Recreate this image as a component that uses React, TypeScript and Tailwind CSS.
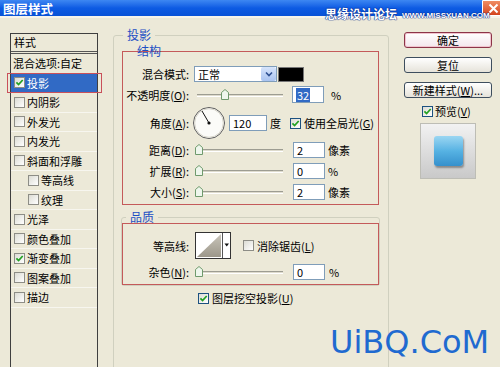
import React from "react";

const cjk = "font-['Noto_Sans_CJK_SC','Noto_Sans',sans-serif]";

function Check({ on = false, gray = false }: { on?: boolean; gray?: boolean }) {
  return (
    <span
      className={
        gray
          ? "flex h-[11px] w-[11px] shrink-0 items-center justify-center border border-[#8d8d86] bg-gradient-to-br from-[#dcdcd4] to-white"
          : "flex h-[11px] w-[11px] shrink-0 items-center justify-center border border-[#1c5180] bg-gradient-to-br from-[#dcdcd4] to-white"
      }
    >
      {on && (
        <svg width="9" height="9" viewBox="0 0 9 9">
          <path d="M1.4 4.3 3.6 6.6 7.7 2" fill="none" stroke="#21a121" strokeWidth="1.7" />
        </svg>
      )}
    </span>
  );
}

function Slider({ at }: { at: number }) {
  return (
    <div className="relative ml-[5px] h-[14px] w-[92px] shrink-0">
      <div className="absolute left-[3px] right-[3px] top-[6px] h-[3px] border-y border-t-[#9d9d92] border-b-white bg-[#dedbcd]" />
      <svg className="absolute top-[1px]" style={{ left: at }} width="8" height="11" viewBox="0 0 8 11">
        <path d="M0.5 3.5 4 0.5 7.5 3.5 V10.5 H0.5Z" fill="#eef6ec" stroke="#6f9a6d" />
      </svg>
    </div>
  );
}

function Field({ children, className }: { children: React.ReactNode; className: string }) {
  return (
    <div className={"flex h-[16px] shrink-0 items-center border border-[#7f9db9] bg-white pl-[3px] " + className}>
      {children}
    </div>
  );
}

function Label({ children }: { children: React.ReactNode }) {
  return <div className="w-[66px] shrink-0 text-right">{children}</div>;
}

function Button({ children, main = false }: { children: React.ReactNode; main?: boolean }) {
  return (
    <div
      className={
        main
          ? "flex h-[16px] items-center justify-center rounded-[3px] border border-[#8c3448] bg-gradient-to-b from-white to-[#f3e6ec] shadow-[inset_0_0_0_1px_#f1c4cf]"
          : "flex h-[16px] items-center justify-center rounded-[3px] border border-[#3e4e5e] bg-gradient-to-b from-white to-[#e6e3da]"
      }
    >
      {children}
    </div>
  );
}

const items = [
  { t: "混合选项:自定", box: false },
  { t: "投影", on: true, sel: true },
  { t: "内阴影" },
  { t: "外发光" },
  { t: "内发光" },
  { t: "斜面和浮雕" },
  { t: "等高线", sub: true },
  { t: "纹理", sub: true },
  { t: "光泽" },
  { t: "颜色叠加" },
  { t: "渐变叠加", on: true },
  { t: "图案叠加" },
  { t: "描边" },
];

export default function App() {
  return (
    <div className={`relative h-[367px] w-[500px] overflow-hidden bg-[#ece9d8] text-[11px] leading-[14px] text-black ${cjk}`}>
      {/* title bar */}
      <div className="flex h-[18px] items-start border-b-2 border-[#f6f4ea] bg-gradient-to-b from-[#3d87f2] via-[#0d5be3] to-[#0852d6]">
        <span className="ml-[3px] mt-[1px] text-[12.5px] font-bold leading-[15px] text-white">图层样式</span>
        <span className="flex-1" />
        <span className="-mr-[4px] flex h-[16px] w-[22px] items-center justify-center rounded-bl-[3px] border border-white bg-gradient-to-b from-[#f08c62] to-[#d3421a]">
          <svg width="11" height="11" viewBox="0 0 11 11">
            <path d="M1.5 1.5 9.5 9.5 M9.5 1.5 1.5 9.5" stroke="white" strokeWidth="2" />
          </svg>
        </span>
      </div>

      <div className="flex">
        {/* style list */}
        <div className="ml-[10px] mt-[15px] h-[340px] w-[88px] shrink-0 border border-[#3f3f3f]">
          <div className="h-[20px] border-b-[3px] border-double border-[#555] pl-[3px] leading-[17px]">样式</div>
          {items.map((it) => (
            <div
              key={it.t}
              className={
                it.sel
                  ? "relative flex h-[19.5px] items-center border-b border-[#f7f6ef] bg-[#316ac5] text-white"
                  : "relative flex h-[19.5px] items-center border-b border-[#f7f6ef]"
              }
            >
              {it.box === false ? (
                <span className="pl-[2px]">{it.t}</span>
              ) : (
                <>
                  <span className={it.sub ? "pl-[17px]" : "pl-[3px]"}>
                    <Check on={it.on} gray />
                  </span>
                  <span className="ml-[2px]">{it.t}</span>
                </>
              )}
              {it.sel && <div className="absolute -bottom-[1px] -left-[4px] -right-[5px] -top-[1px] border border-[#c9505a]" />}
            </div>
          ))}
        </div>

        {/* drop shadow settings */}
        <fieldset className="ml-[15px] mt-[10px] h-[400px] w-[276px] shrink-0 rounded-[3px] border border-[#d0d0bf]">
          <legend className="ml-[9px] px-[4px] text-[12px] leading-[14px] text-[#1d4fc4]">投影</legend>

          {/* structure */}
          <div className="ml-[8px] mt-[9px] w-[257px] border border-[#c45a5a] pb-[4px]">
            <div className="-mt-[8px] ml-[14px] h-[14px] text-[12px] leading-[14px] text-[#1d4fc4]">结构</div>

            <div className="mt-[8px] flex h-[16px] items-center">
              <Label>混合模式:</Label>
              <div className="ml-[5px] flex h-[16px] w-[83px] items-center justify-between border border-[#7f9db9] bg-white pl-[3px]">
                <span>正常</span>
                <span className="flex h-[14px] w-[15px] items-center justify-center rounded-[2px] bg-gradient-to-b from-[#d6e4fb] to-[#a9c3f0]">
                  <svg width="8" height="6" viewBox="0 0 8 6">
                    <path d="M1 1.5 4 4.5 7 1.5" fill="none" stroke="#2d4f91" strokeWidth="1.6" />
                  </svg>
                </span>
              </div>
              <div className="ml-[1px] h-[15px] w-[26px] border border-[#777] bg-black" />
            </div>

            <div className="mt-[4px] flex h-[17px] items-center">
              <Label>
                不透明度(<u>O</u>):
              </Label>
              <Slider at={27} />
              <Field className="ml-[6px] h-[17px] w-[32px]">
                <span className="bg-[#316ac5] px-[1px] text-white">32</span>
              </Field>
              <span className="ml-[7px]">%</span>
            </div>

            <div className="mt-[3px] flex h-[34px] items-center">
              <Label>
                角度(<u>A</u>):
              </Label>
              <svg className="ml-[3px] shrink-0" width="34" height="34" viewBox="0 0 34 34">
                <circle cx="17" cy="17" r="15.5" fill="#fbfbf8" stroke="#5c5c5c" />
                <circle cx="17" cy="17" r="14.3" fill="none" stroke="#d9d7cc" />
                <line x1="17" y1="17" x2="10" y2="5" stroke="#111" strokeWidth="1" />
                <circle cx="17" cy="17" r="1.6" fill="#111" />
              </svg>
              <Field className="ml-[3px] w-[38px]">120</Field>
              <span className="ml-[3px]">度</span>
              <span className="ml-[9px]">
                <Check on />
              </span>
              <span className="ml-[3px]">
                使用全局光(<u>G</u>)
              </span>
            </div>

            {[
              { l: "距离", k: "D", v: "2", u: "像素" },
              { l: "扩展", k: "R", v: "0", u: "%" },
              { l: "大小", k: "S", v: "2", u: "像素" },
            ].map((r, i) => (
              <div key={r.l} className={i === 0 ? "mt-[2px] flex h-[16px] items-center" : "mt-[5px] flex h-[16px] items-center"}>
                <Label>
                  {r.l}(<u>{r.k}</u>):
                </Label>
                <Slider at={1} />
                <Field className="ml-[7px] w-[32px]">{r.v}</Field>
                <span className="ml-[3px]">{r.u}</span>
              </div>
            ))}
          </div>

          {/* quality */}
          <fieldset className="ml-[7px] mt-[5px] w-[259px] rounded-[3px] border border-[#d0d0bf]">
            <legend className="ml-[4px] px-[4px] text-[12px] leading-[14px] text-[#1d4fc4]">品质</legend>
            <div className="-mt-[1px] border border-[#c45a5a] pb-[4px]">
              <div className="mt-[8px] flex h-[27px] items-center">
                <Label>等高线:</Label>
                <svg className="ml-[6px] shrink-0" width="36" height="27" viewBox="0 0 36 27">
                  <defs>
                    <linearGradient id="cg" x1="0" y1="0" x2="0" y2="1">
                      <stop offset="0" stopColor="#c9c5ba" />
                      <stop offset="1" stopColor="#9c978a" />
                    </linearGradient>
                  </defs>
                  <rect x="0.5" y="0.5" width="35" height="26" fill="white" stroke="#333" />
                  <polygon points="2,25 26,2 26,25" fill="url(#cg)" />
                  <line x1="27.5" y1="1" x2="27.5" y2="26" stroke="#555" />
                  <polygon points="29.5,11.5 34,11.5 31.75,14.5" fill="#111" />
                </svg>
                <span className="ml-[12px]">
                  <Check gray />
                </span>
                <span className="ml-[3px]">
                  消除锯齿(<u>L</u>)
                </span>
              </div>
              <div className="mt-[5px] flex h-[16px] items-center">
                <Label>
                  杂色(<u>N</u>):
                </Label>
                <Slider at={1} />
                <Field className="ml-[7px] w-[32px]">0</Field>
                <span className="ml-[4px]">%</span>
              </div>
            </div>
          </fieldset>

          <div className="ml-[84px] mt-[6px] flex h-[12px] items-center">
            <Check on />
            <span className="ml-[3px]">
              图层挖空投影(<u>U</u>)
            </span>
          </div>
        </fieldset>

        {/* buttons */}
        <div className="ml-[15px] mt-[14px] w-[88px] shrink-0">
          <Button main>确定</Button>
          <div className="mt-[9px]">
            <Button>复位</Button>
          </div>
          <div className="mt-[9px]">
            <Button>
              新建样式(<u>W</u>)...
            </Button>
          </div>
          <div className="ml-[18px] mt-[7px] flex h-[12px] items-center">
            <Check on />
            <span className="ml-[2px]">
              预览(<u>V</u>)
            </span>
          </div>
          <div className="ml-[16px] mt-[6px] flex h-[56px] w-[56px] items-center justify-center border border-[#bdbdb5] bg-gradient-to-b from-[#f2f2f2] to-[#c9c9c9]">
            <div className="h-[30px] w-[29px] rounded-[3px] bg-gradient-to-b from-[#9ad6f2] via-[#56b2e3] to-[#3590cc] shadow-[1px_2px_2px_rgba(0,0,0,0.35)]" />
          </div>
        </div>
      </div>

      {/* watermarks */}
      <div className="absolute left-[325px] top-[7px] flex items-end whitespace-nowrap text-white [text-shadow:0_0_1px_#0b2a8a,0_0_1px_#0b2a8a,0_0_1px_#0b2a8a]">
        <span className="text-[12px] font-bold leading-[14px]">思缘设计论坛</span>
        <span className="ml-[5px] font-['Liberation_Sans',sans-serif] text-[8px] font-bold leading-[10px]">WWW.MISSYUAN.COM</span>
      </div>
      <div className="absolute left-[330px] top-[326px] font-['DejaVu_Sans',sans-serif] text-[32px] leading-[32px] text-[#1f6ad0]">
        UiBQ.CoM
      </div>
    </div>
  );
}
